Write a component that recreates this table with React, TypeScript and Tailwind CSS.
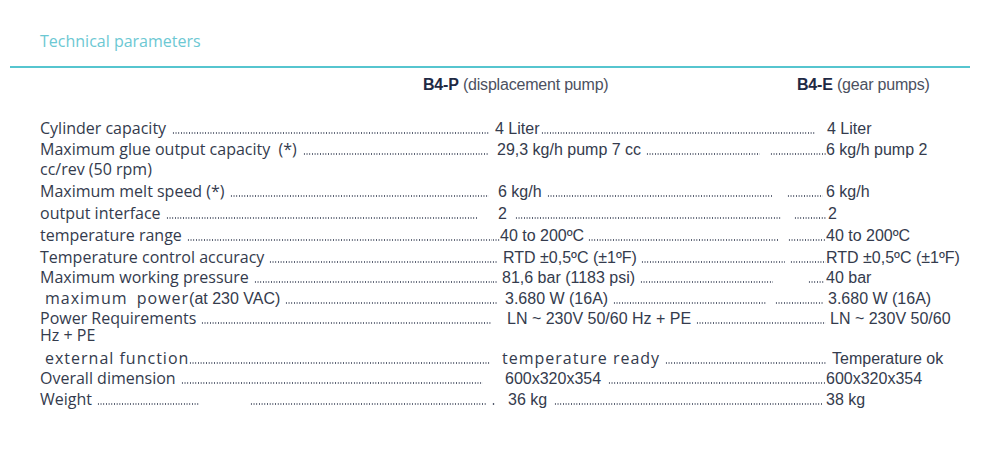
import React from "react";

// dotted leader drawn as a repeating background, sitting on the text baseline
const Dots = ({ c = "flex-1" }: { c?: string }) => (
    <span
        className={`${c} min-w-0 h-[2px] bg-[radial-gradient(circle,#555c6e_0.75px,transparent_1px)] bg-[length:2.7px_2px] bg-repeat-x`}
    />
);

type TextProps = { c?: string; l?: string; children: React.ReactNode };

// label text (humanist face)
const T = ({ c = "", l = "leading-[21px]", children }: TextProps) => (
    <span className={`flex-none whitespace-nowrap font-['Open_Sans',sans-serif] text-[16px] ${l} ${c}`}>{children}</span>
);

// value text (arial-like face)
const V = ({ c = "", l = "leading-[21px]", children }: TextProps) => (
    <span className={`flex-none whitespace-nowrap font-['Liberation_Sans',sans-serif] text-[16px] ${l} ${c}`}>{children}</span>
);

const Row = ({ a, b, c, m = "" }: { a: React.ReactNode; b?: React.ReactNode; c?: React.ReactNode; m?: string }) => (
    <div className={`flex items-baseline pl-[40px] ${m}`}>
        <div className="w-[452px] flex-none flex items-baseline min-w-0">{a}</div>
        <div className="w-[334px] flex-none flex items-baseline min-w-0">{b}</div>
        <div className="flex-1 flex items-baseline min-w-0">{c}</div>
    </div>
);

export default function App() {
    return (
        <div className="w-[1000px] h-[456px] bg-white overflow-hidden text-[#343b4d]">
            {/* Title */}
            <div className="pt-[31px] pl-[40px] h-[51px] font-['Open_Sans',sans-serif] text-[16px] leading-[20px] text-[#6cc8d3]">
                Technical parameters
            </div>
            <div className="mt-[15px] ml-[10px] w-[960px] h-[2px] bg-[#56c5cf]" />

            {/* Column header */}
            <div className="mt-[7px] h-[20px] pl-[40px] flex items-baseline font-['Liberation_Sans',sans-serif] text-[16px] leading-[20px] text-[#4b5060]">
                <div className="w-[383px] flex-none" />
                <div className="w-[374px] flex-none tracking-[-0.2px]">
                    <span className="font-bold text-[#1f2a44]">B4-P</span> (displacement pump)
                </div>
                <div className="flex-1 tracking-[-0.2px]">
                    <span className="font-bold text-[#1f2a44]">B4-E</span> (gear pumps)
                </div>
            </div>

            {/* Parameters */}
            <div className="mt-[23px]">
                <Row
                    m="h-[21px]"
                    a={<><T>Cylinder capacity</T><Dots c="flex-1 ml-[6px] mr-[3px]" /></>}
                    b={<><V c="ml-[3px]">4 Liter</V><Dots c="flex-1 ml-[2px] mr-[11px]" /></>}
                    c={<V c="ml-[1px]">4 Liter</V>}
                />
                <Row
                    m="h-[21px]"
                    a={<><T>Maximum glue output capacity&nbsp;&nbsp;(*)</T><Dots c="flex-1 ml-[6px] mr-[3px]" /></>}
                    b={<><V c="ml-[5px]">29,3 kg/h pump 7 cc</V><Dots c="flex-1 ml-[5px] mr-[10px]" /><Dots c="w-[56px] flex-none" /></>}
                    c={<V>6 kg/h pump 2</V>}
                />
                <Row m="h-[21px] -mt-[1px]" a={<T c="text-[15px]">cc/rev (50 rpm)</T>} />
                <Row
                    m="h-[21px] mt-[1px]"
                    a={<><T>Maximum melt speed (*)</T><Dots c="flex-1 ml-[5px] mr-[3px]" /></>}
                    b={<><V c="ml-[6px]">6 kg/h</V><Dots c="flex-1 ml-[5px] mr-[14px]" /><Dots c="w-[36px] flex-none mr-[3px]" /></>}
                    c={<V>6 kg/h</V>}
                />
                <Row
                    m="h-[21px] mt-[1px]"
                    a={<><T>output interface</T><Dots c="flex-1 ml-[5px] mr-[15px]" /></>}
                    b={<><V c="ml-[6px]">2</V><Dots c="flex-1 ml-[8px] mr-[13px]" /><Dots c="w-[32px] flex-none" /></>}
                    c={<V c="ml-[2px]">2</V>}
                />
                <Row
                    m="h-[21px] mt-[1px]"
                    a={<><T>temperature range</T><Dots c="flex-1 ml-[5px]" /></>}
                    b={<><Dots c="w-[8px] flex-none" /><V>40 to 200ºC</V><Dots c="flex-1 ml-[4px] mr-[10px]" /><Dots c="w-[38px] flex-none" /></>}
                    c={<V>40 to 200ºC</V>}
                />
                <Row
                    m="h-[21px] mt-[1px]"
                    a={<><T>Temperature control accuracy</T><Dots c="flex-1 ml-[5px]" /></>}
                    b={<><Dots c="w-[5px] flex-none" /><V c="ml-[6px]">RTD ±0,5ºC (±1ºF)</V><Dots c="flex-1 ml-[4px] mr-[5px]" /><Dots c="w-[36px] flex-none" /></>}
                    c={<V>RTD ±0,5ºC (±1ºF)</V>}
                />
                <Row
                    m="h-[21px] -mt-[1px]"
                    a={<><T>Maximum working pressure</T><Dots c="flex-1 ml-[5px]" /></>}
                    b={<><Dots c="w-[5px] flex-none" /><V c="ml-[5px]">81,6 bar (1183 psi)</V><Dots c="flex-1 ml-[5px] mr-[35px]" /><Dots c="w-[17px] flex-none mr-[1px]" /></>}
                    c={<V>40 bar</V>}
                />
                <Row
                    m="h-[21px]"
                    a={<><T c="ml-[5px] tracking-[1px] [word-spacing:4px]">maximum power</T><V c="text-[15px]">(at 230 VAC)</V><Dots c="flex-1 ml-[5px]" /></>}
                    b={<><Dots c="w-[5px] flex-none" /><V c="ml-[8px]">3.680 W (16A)</V><Dots c="flex-1 ml-[5px] mr-[8px]" /><Dots c="w-[48px] flex-none mr-[3px]" /></>}
                    c={<V c="ml-[2px]">3.680 W (16A)</V>}
                />
                <Row
                    m="h-[21px] pt-[1px] -mt-[1px]"
                    a={<><T l="leading-[19px]">Power Requirements</T><Dots c="flex-1 ml-[5px]" /></>}
                    b={<><V l="leading-[19px]" c="ml-[15px]">LN ~ 230V 50/60 Hz + PE</V><Dots c="flex-1 ml-[5px]" /></>}
                    c={<V l="leading-[19px]" c="ml-[4px]">LN ~ 230V 50/60</V>}
                />
                <Row m="h-[14px] -mt-[1px]" a={<T l="leading-[14px]">Hz + PE</T>} />
                <Row
                    m="h-[21px] mt-[6px]"
                    a={<><T c="ml-[5px] tracking-[1px]">external function</T><Dots c="flex-1 mr-[2px]" /></>}
                    b={<><T c="ml-[10px] tracking-[1px]">temperature ready</T><Dots c="flex-1 ml-[5px]" /></>}
                    c={<V c="ml-[6px]">Temperature ok</V>}
                />
                <Row
                    m="h-[21px] -mt-[1px]"
                    a={<><T>Overall dimension</T><Dots c="flex-1 ml-[5px] mr-[9px]" /></>}
                    b={<><V c="ml-[13px]">600x320x354</V><Dots c="flex-1 ml-[7px]" /></>}
                    c={<V>600x320x354</V>}
                />
                <Row
                    m="h-[21px]"
                    a={<><T>Weight</T><Dots c="w-[102px] flex-none ml-[5px]" /><span className="w-[51px] flex-none" /><Dots c="flex-1 mr-[5px]" /></>}
                    b={<><Dots c="w-[3px] flex-none" /><V c="ml-[13px]">36 kg</V><Dots c="flex-1 ml-[7px] mr-[3px]" /></>}
                    c={<V>38 kg</V>}
                />
            </div>
        </div>
    );
}
